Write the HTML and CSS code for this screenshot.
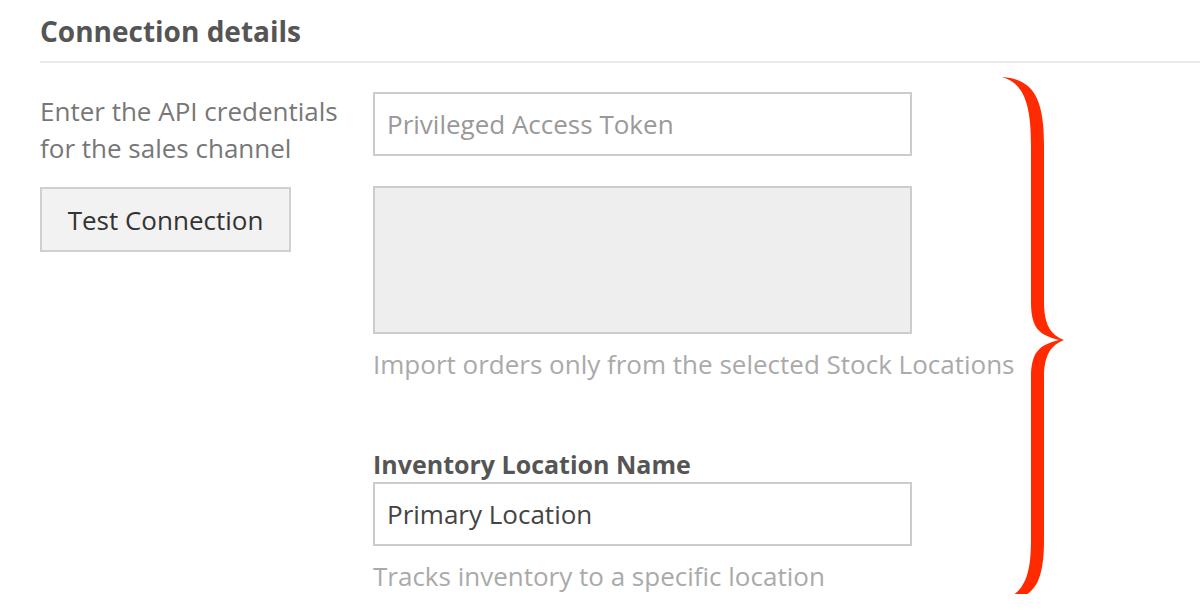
FILE: index.html
```html
<!DOCTYPE html>
<html lang="en">
<head>
    <meta charset="UTF-8">
    <title>Connection details</title>
    <link rel="stylesheet" href="styles.css">
</head>
<body>
    <div class="section">
        <h2 class="section-title">Connection details</h2>

        <div class="row">
            <div class="side">
                <p class="side-text">Enter the API credentials for the sales channel</p>
                <button type="button" class="btn">Test Connection</button>
            </div>

            <div class="fields">
                <input type="text" class="field" placeholder="Privileged Access Token">
                <div class="locations"></div>
                <p class="hint">Import orders only from the selected Stock Locations</p>

                <label class="field-label" for="locName">Inventory Location Name</label>
                <input type="text" id="locName" class="field" value="Primary Location">
                <p class="hint">Tracks inventory to a specific location</p>
            </div>
        </div>

        <!-- annotation brace -->
        <svg class="brace" width="80" height="540" viewBox="0 0 80 540">
            <path fill="#ff2a00" d="M7,7 C38,9 49,28 49,75 L49,232 C49,255 56,265 69,270 C56,275 49,285 49,308 L49,470 C49,515 38,530 7,530 C28,524 36,508 36,470 L36,308 C36,282 44,275 64,270 C44,265 36,258 36,232 L36,75 C36,32 28,13 7,7 Z"/>
        </svg>
    </div>
</body>
</html>
```

FILE: styles.css
```css
* {
    box-sizing: border-box;
}

body {
    margin: 0;
    font-family: 'Open Sans', 'Liberation Sans', sans-serif;
    background: #fff;
    color: #555;
    overflow: hidden;
}

.section {
    position: relative;
    padding: 13px 0 0 40px;
}

.section-title {
    margin: 0;
    font-size: 28px;
    font-weight: 700;
    line-height: 36px;
    color: #555;
    padding-bottom: 12px;
    border-bottom: 2px solid #e9e9e9;
}

.row {
    display: flex;
    padding-top: 29px;
}

.side {
    width: 333px;
}

.side-text {
    margin: 0;
    padding-top: 1px;
    font-size: 26px;
    line-height: 37px;
    color: #777;
}

.btn {
    margin-top: 20px;
    width: 251px;
    height: 65px;
    background: #f2f2f2;
    border: 2px solid #d0d0d0;
    font-family: inherit;
    font-size: 26px;
    color: #333;
    cursor: pointer;
}

.fields {
    width: 539px;
}

.field {
    display: block;
    width: 100%;
    height: 64px;
    padding: 0 12px;
    border: 2px solid #ccc;
    font-family: inherit;
    font-size: 26px;
    color: #444;
    outline: none;
}

.field::placeholder {
    color: #999;
}

.locations {
    margin-top: 30px;
    height: 148px;
    background: #eee;
    border: 2px solid #ccc;
}

.hint {
    margin: 12px 0 0;
    font-size: 26px;
    line-height: 36px;
    color: #aaa;
    white-space: nowrap;
}

.field-label {
    display: block;
    margin-top: 66px;
    margin-bottom: 2px;
    font-size: 25px;
    font-weight: 700;
    line-height: 32px;
    color: #555;
}

.brace {
    position: absolute;
    left: 995px;
    top: 70px;
}
```
